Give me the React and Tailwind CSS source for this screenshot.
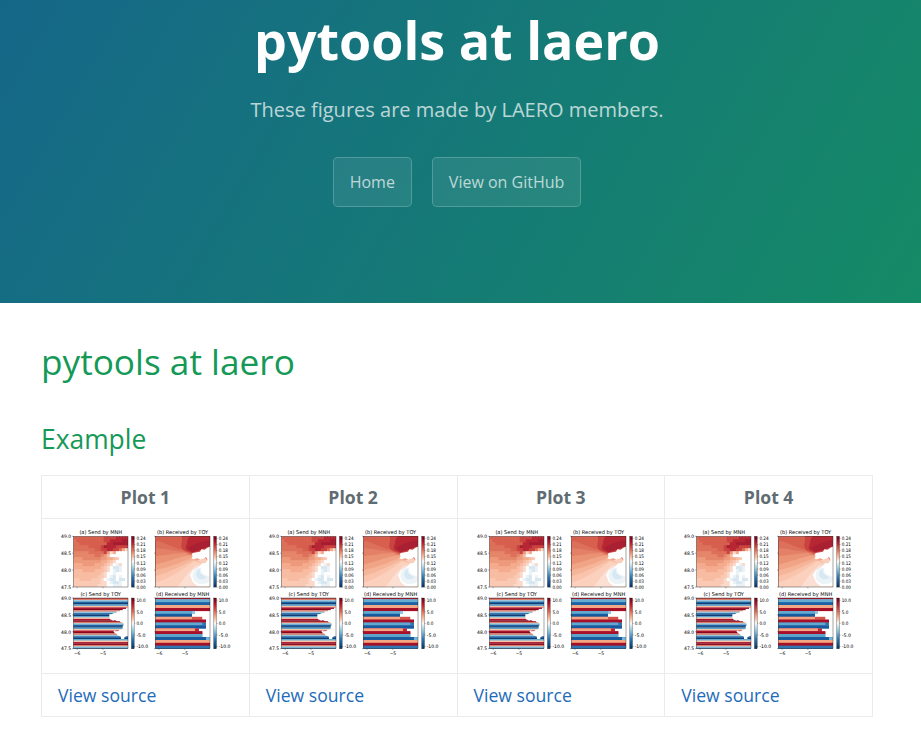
const COLORS = {
  A: '#a51d30', B: '#b72733', C: '#c94441', D: '#d6604d', E: '#dc705a',
  F: '#e5866b', G: '#ed9a7c', H: '#f4ab8e', I: '#f8bca2', J: '#fac9b3',
  K: '#fbd9ca', W: '#ffffff', X: '#ebf2f6', Y: '#d6e7f1',
};

const SENT = [
  'DDDDDDDDDDCCCCBBBB',
  'EDDDDDDDDDCCBBBBAA',
  'EEDDDDDDDDDBBAAAAA',
  'EEEEEDDDDCABBBCCCC',
  'EEEEEEEDDCCBBCCEHK',
  'FFFFFEEEEECGKHWWWW',
  'FFFFFFFEEFGIWWWWWW',
  'GGGFFFFFFGGHHIJWWW',
  'GGGGGGGGGHHIJKWWWW',
  'HHHGGGGHHHIJKWXKWW',
  'HHHHHHHHHIJKWYYXWW',
  'IIIHHHHIIIJKWXYXWW',
  'IIIIIIIIIJKWWXWWWW',
  'IIIIIIIIJJKWXYWXWW',
  'JJIIIIJJJKWXYYWYYW',
  'JJJJJJJJJKKWXYYXWW',
  'JJJJJJJJKKKWWXXXWW',
];

const RECEIVED = [
  ['#b2182b', 164, '#b2182b', 164], ['#67add1', 164, '#67add1', 164],
  ['#1b61a5', 164, '#1b61a5', 164], ['#f5a886', 164, '#f5a886', 164],
  ['#a50f26', 164, '#a50f26', 164], ['#62a9cf', 110, '#8fc3dd', 119],
  ['#155a9c', 110, '#155a9c', 110], ['#f4a582', 110, '#d3564a', 141],
  ['#a81028', 152, '#a81028', 152], ['#62a9cf', 141, '#2e75b2', 152],
  ['#185b9e', 152, '#185b9e', 152], ['#f4a582', 119, '#bd2735', 131],
  ['#a81028', 141, '#a81028', 141], ['#5ba4cc', 141, '#5ba4cc', 141],
  ['#185b9e', 164, '#185b9e', 164], ['#f4a582', 164, '#f4a582', 164],
  ['#a51026', 164, '#a51026', 164], ['#2f76b3', 164, '#2f76b3', 164],
];

const WAVE = ['#92c5de', '#1f63a5', '#0c3f76', '#5ba3cb', '#f9c3a8', '#ad172b', '#860923', '#e07f68'];

function Label({ x, y, w, size = 4.7, anchor = 'start', children }) {
  return (
    <text x={x} y={y} fontSize={size} textAnchor={anchor} textLength={w} lengthAdjust="spacingAndGlyphs" fill="#000">
      {children}
    </text>
  );
}

function Colorbar({ x, y, labels }) {
  return (
    <g>
      <rect x={x} y={y} width="2.8" height="50.8" fill="url(#rdbu)" stroke="#222" strokeWidth="0.3" />
      {labels.map(([text, cy]) => (
        <g key={text}>
          <path d={`M${x + 2.8} ${cy}h1`} stroke="#222" strokeWidth="0.4" />
          <Label x={x + 5} y={cy + 1.7} w={text.replace('.', '').length * 2.6 + 1.4}>{text}</Label>
        </g>
      ))}
    </g>
  );
}

function Frame({ x, y, xLabels, yLabels }) {
  return (
    <g>
      <rect x={x} y={y} width="54.7" height="50.7" fill="none" stroke="#222" strokeWidth="0.4" />
      {[0, 16.9, 33.8, 50.7].map((d, i) => (
        <g key={d}>
          <path d={`M${x} ${y + d}h-1.2`} stroke="#222" strokeWidth="0.4" />
          {yLabels && <Label x={x - 2.2} y={y + d + 1.7} w={10} anchor="end">{['49.0', '48.5', '48.0', '47.5'][i]}</Label>}
        </g>
      ))}
      {[3.8, 29.6].map((d, i) => (
        <g key={d}>
          <path d={`M${x + d} ${y + 50.7}v1.2`} stroke="#222" strokeWidth="0.4" />
          {xLabels && <Label x={x + d} y={y + 57.2} w={6.4} anchor="middle">{['−6', '−5'][i]}</Label>}
        </g>
      ))}
    </g>
  );
}

const SMALL = [0.24, 0.21, 0.18, 0.15, 0.12, 0.09, 0.06, 0.03, 0].map((v, i) => [v.toFixed(2), 538.4 + i * 6.12]);
const LARGE = ['10.0', '5.0', '0.0', '-5.0', '-10.0'].map((t, i) => [t, 600.3 + i * 11.55]);

function Plot() {
  return (
    <svg viewBox="58 527 176 131" className="block h-[131px] w-[176px]" fontFamily="DejaVu Sans, sans-serif">
      <defs>
        <linearGradient id="rdbu" x1="0" y1="0" x2="0" y2="1">
          <stop offset="0" stopColor="#67001f" />
          <stop offset="0.12" stopColor="#b2182b" />
          <stop offset="0.25" stopColor="#d6604d" />
          <stop offset="0.36" stopColor="#f4a582" />
          <stop offset="0.5" stopColor="#f7f7f7" />
          <stop offset="0.64" stopColor="#92c5de" />
          <stop offset="0.8" stopColor="#2f79b5" />
          <stop offset="1" stopColor="#053061" />
        </linearGradient>
        <clipPath id="panelA"><rect x="73.3" y="536.3" width="54.7" height="50.7" /></clipPath>
        <clipPath id="panelB"><rect x="155.3" y="536.3" width="54.7" height="50.7" /></clipPath>
        <clipPath id="panelC"><rect x="73.3" y="598" width="54.7" height="50.7" /></clipPath>
      </defs>

      <Label x="79.4" y="534" w={42.8} size={5.3}>(a) Send by MNH</Label>
      <Label x="157" y="534" w={51.2} size={5.3}>(b) Received by TOY</Label>
      <Label x="80.4" y="595.6" w={40.6} size={5.3}>(c) Send by TOY</Label>
      <Label x="156" y="595.6" w={53.3} size={5.3}>(d) Received by MNH</Label>

      <g clipPath="url(#panelA)">
        {SENT.map((row, j) => [...row].map((c, i) => (
          <rect key={`${i}-${j}`} x={73.3 + i * 3.04} y={536.3 + j * 2.982} width="4" height="4" fill={COLORS[c]} />
        )))}
      </g>

      <g clipPath="url(#panelB)">
        <g transform="translate(152 533) scale(0.33333)">
          <rect x="8" y="8" width="170" height="160" fill="#d6604d" />
          <path d="M8 24C34 22 56 44 92 50L120 60L178 90V165H8Z" fill="#dc705a" />
          <path d="M8 46C40 44 60 56 96 56L125 70L178 90V165H8Z" fill="#e38067" />
          <path d="M8 70C40 66 66 62 100 60L125 74L178 96V165H8Z" fill="#ea9274" />
          <path d="M8 96C40 88 74 74 116 66L178 96V165H8Z" fill="#f1a486" />
          <path d="M8 112C44 106 80 90 118 76L178 96V165H8Z" fill="#f6b498" />
          <path d="M8 130C44 120 84 102 122 82L178 100V165H8Z" fill="#f9c3ac" />
          <path d="M8 148C50 140 90 110 128 84L178 100V165H8Z" fill="#fbd0bd" />
          <path d="M72 165C90 152 100 120 134 96L178 100V165Z" fill="#fbdfd2" />
          <path d="M88 8C96 24 78 40 96 53L122 62L178 44V8Z" fill="#c94441" />
          <path d="M116 8C102 18 108 30 102 40C98 48 108 54 122 58L146 50L178 36V8Z" fill="#b72733" />
          <path d="M176 20C150 24 124 34 108 46L122 57L146 50L176 38Z" fill="#a92033" />
          <path d="M178 40L166 44L158 50L148 49L144 56L122 60L119 66L122 70L118 76L124 79L136 76L146 81L156 77L162 72L166 80L178 90Z" fill="#fff" />
          <path d="M178 80L164 82L160 90L150 91L140 102L122 112L114 126L122 146L136 160L178 160Z" fill="#fff" />
          <path d="M134 82L148 80L160 74L166 82L160 90L148 90Z" fill="#fad0bd" />
          <path d="M134 104C122 110 118 128 124 140C132 154 152 158 170 148L174 132L160 126C148 122 146 112 148 104Z" fill="#edf4f8" />
          <path d="M138 110C130 118 130 130 140 137C150 142 160 138 164 133L152 126C144 120 142 116 144 108Z" fill="#d8e8f2" />
        </g>
      </g>

      <g clipPath="url(#panelC)">
        {Array.from({ length: 44 }, (_, i) => (
          <rect key={i} x="73" y={588.55 + i * 1.446} width="56" height="1.6" fill={WAVE[i % 8]} />
        ))}
        <path
          transform="translate(70 595) scale(0.33333)"
          d="M176 36L168 38V42L158 42V46L150 46V49L140 49V53L128 55V57L118 58V66L120 73L130 77L134 75L142 79L148 78L152 82L160 84L161 90L158 94V103L148 104L146 108L136 109V106L130 108L134 114L140 117L144 122L150 123L153 126V132H163V127L168 124L176 122Z"
          fill="#fff"
        />
      </g>

      <g>
        <rect x="155.3" y="598" width="54.7" height="50.7" fill="#fff" />
        {RECEIVED.map(([first, a, second, b], j) => {
          const y = j === 0 ? 598 : 599.4 + (j - 1) * 2.9;
          const h = j === 0 ? 1.45 : 2.95;
          return (
            <g key={j}>
              <rect x="155.3" y={y} width={b / 3} height={h} fill={second} />
              <rect x="155.3" y={y} width={a / 3} height={h} fill={first} />
            </g>
          );
        })}
        <rect x="206" y="637.1" width="4" height="2.9" fill="#78b6d6" />
      </g>

      <Frame x={73.3} y={536.3} yLabels />
      <Frame x={155.3} y={536.3} />
      <Frame x={73.3} y={598} yLabels xLabels />
      <Frame x={155.3} y={598} xLabels />
      <Colorbar x={131.4} y={536.3} labels={SMALL} />
      <Colorbar x={213.7} y={536.3} labels={SMALL} />
      <Colorbar x={131.4} y={598} labels={LARGE} />
      <Colorbar x={213.7} y={598} labels={LARGE} />
    </svg>
  );
}

function HeaderButton({ children }) {
  return (
    <a href="#" className="rounded-[4.8px] border border-white/20 bg-white/8 px-4 py-3 text-base leading-6 text-white/70">
      {children}
    </a>
  );
}

const PLOTS = ['Plot 1', 'Plot 2', 'Plot 3', 'Plot 4'];
const CELL = 'border border-[#e9ebec] px-4';

export default function App() {
  return (
    <div className="h-[733px] w-[921px] overflow-hidden bg-white font-['Open_Sans',sans-serif] text-[17.6px] text-[#606c71]">
      <header className="flex h-[303px] flex-col items-center bg-[linear-gradient(120deg,#155799_-46.9%,#159957_142.2%)] pr-[7px] text-white">
        <h1 className="mt-px text-[52px] leading-[78px] font-bold">pytools at laero</h1>
        <p className="mt-4 text-xl leading-[30px] font-normal opacity-70">These figures are made by LAERO members.</p>
        <nav className="mt-8 flex gap-5">
          <HeaderButton>Home</HeaderButton>
          <HeaderButton>View on GitHub</HeaderButton>
        </nav>
      </header>
      <main className="pl-[41px]">
        <h1 className="mt-[34px] text-[35.2px] leading-[48px] font-normal text-[#159957]">pytools at laero</h1>
        <h2 className="mt-[34px] text-[26.4px] leading-[41px] font-normal text-[#159957]">Example</h2>
        <table className="mt-[15px] w-[832px] table-fixed border-collapse leading-[27px]">
          <thead>
            <tr>{PLOTS.map((p) => <th key={p} className={`${CELL} h-[43px] py-0 text-center font-bold`}>{p}</th>)}</tr>
          </thead>
          <tbody>
            <tr>{PLOTS.map((p) => <td key={p} className={`${CELL} h-[155px] pt-2 pb-0 align-top`}><Plot /></td>)}</tr>
            <tr>{PLOTS.map((p) => <td key={p} className={`${CELL} h-[43px] py-0`}><a href="#" className="text-[#1e6bb8]">View source</a></td>)}</tr>
          </tbody>
        </table>
      </main>
    </div>
  );
}
